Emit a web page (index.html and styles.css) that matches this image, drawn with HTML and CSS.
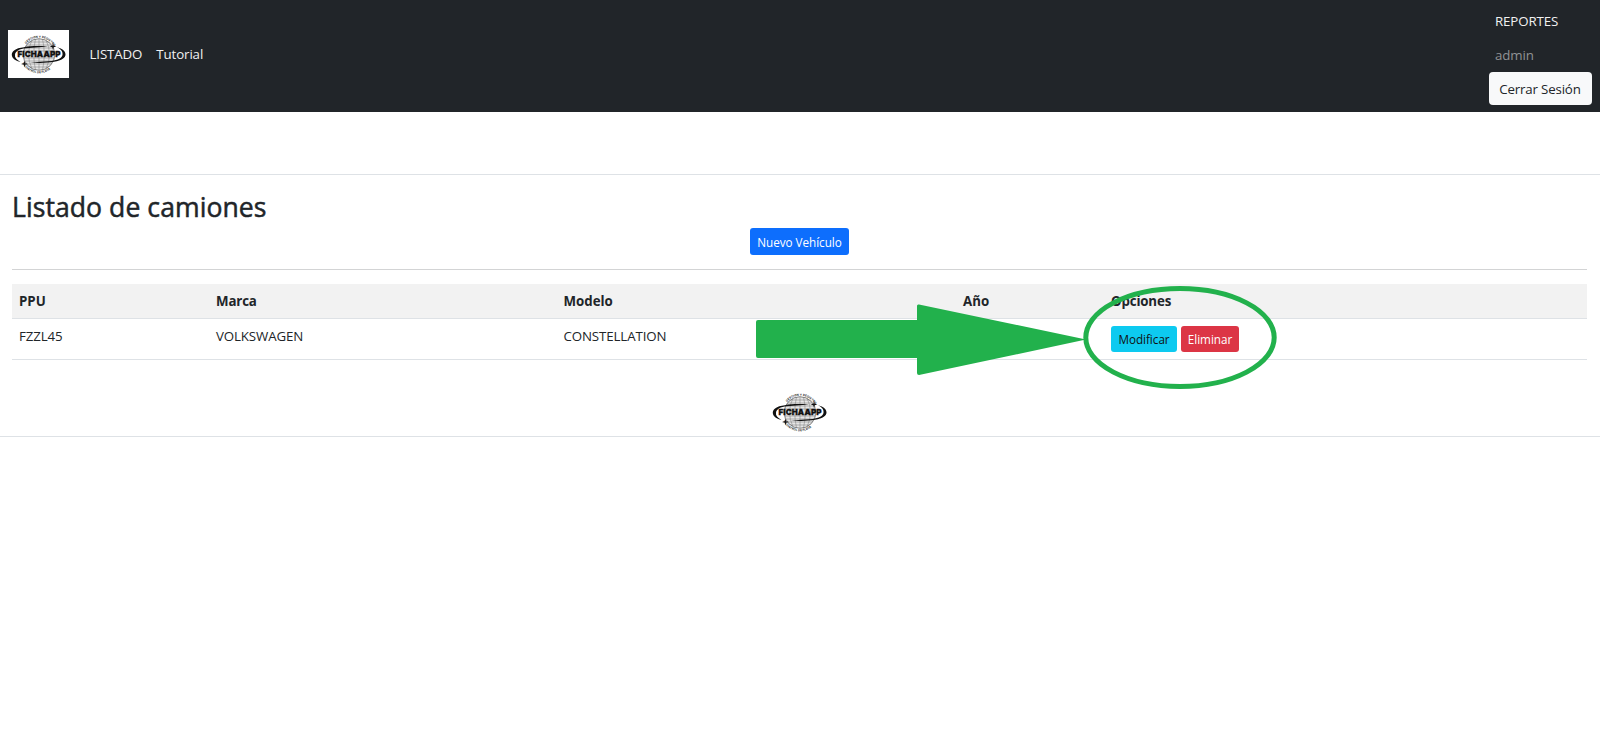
FILE: index.html
```html
<!DOCTYPE html>
<html lang="es">
<head>
<meta charset="utf-8">
<title>Listado de camiones</title>
<link rel="stylesheet" href="styles.css">
</head>
<body>
<svg class="defs" width="0" height="0" aria-hidden="true">
  <defs>
    <clipPath id="globe-clip"><circle cx="31" cy="24.5" r="16"/></clipPath>
    <path id="arc-top" d="M18 13.900A16.800 16.800 0 0 1 47.500 21"/>
    <path id="arc-bottom" d="M14 33A19 19 0 0 0 49 30"/>
    <symbol id="fichaapp" viewBox="0 0 61 48">
      <rect width="61" height="48" fill="#fff"/>
      <circle cx="31" cy="24.5" r="15.8" fill="#e6e6e6" stroke="#555" stroke-width=".7"/>
      <g clip-path="url(#globe-clip)" fill="none" stroke="#777" stroke-width=".5">
        <path d="M17 12H45M16 15H46M15 18H47M15 31H47M16 34H46M18 37H44M15 21H47M15 28H47"/>
        <path d="M31 9V40M27.500 9Q24 24 27.500 40M34.500 9Q38 24 34.500 40M24 10Q17 24 24 39M38 10Q45 24 38 39"/>
      </g>
      <path d="M16 17.200C7 18 3.600 21.500 3.800 25C4 28.500 8 31 12.500 31.800C8.500 30 6.500 27.500 7 24.500C7.500 21 11.500 18.800 18 18.200L40 16.500C31 15.800 22 16 16 17.200Z" fill="#111"/>
      <path d="M46 31.800C54 30.500 57.600 27.800 57.500 24.300C57.400 20.800 53.500 18 49 17.200C53 19 55 21.800 54.500 24.700C54 28.100 50 30.100 43.500 30.900L22 32.500C31 33.200 40 33 46 31.800Z" fill="#111"/>
      <path d="M45 13l.7 2.800 2.800.7-2.800.7-.7 2.800-.7-2.800-2.800-.7 2.800-.7zM16.500 30.500l.7 2.800 2.800.7-2.800.7-.7 2.800-.7-2.800-2.800-.7 2.800-.7z" fill="#111"/>
      <text class="brand-word" x="9.500" y="27.400" textLength="43">FICHAAPP</text>
      <text class="brand-small"><textPath href="#arc-top">GESTION Y REGISTRO</textPath></text>
      <text class="brand-small"><textPath href="#arc-bottom">Y CONTROL DE FLOTA</textPath></text>
    </symbol>
  </defs>
</svg>
<header class="navbar">
  <svg class="logo"><use href="#fichaapp"/></svg>
  <nav class="nav-main"><a>LISTADO</a><a>Tutorial</a></nav>
  <div class="nav-side">
    <a>REPORTES</a>
    <span class="user">admin</span>
    <button class="btn logout">Cerrar Sesión</button>
  </div>
</header>
<main class="panel">
  <h2>Listado de camiones</h2>
  <div class="actions"><button class="btn small primary">Nuevo Vehículo</button></div>
  <div class="rule"></div>
  <div class="row head">
    <div>PPU</div><div class="tight">Marca</div><div>Modelo</div><div>Año</div><div class="tight">Opciones</div>
  </div>
  <div class="row body">
    <div>FZZL45</div><div>VOLKSWAGEN</div><div>CONSTELLATION</div><div></div>
    <div class="options"><button class="btn small info">Modificar</button><button class="btn small danger">Eliminar</button></div>
  </div>
  <footer><svg class="logo"><use href="#fichaapp"/></svg></footer>
</main>
<svg class="annotation" viewBox="0 0 530 120">
  <path d="M8 39H167V25Q167 23 169 23.500L336 58.500L169 94Q167 94 167 92V77H8Q6 77 6 75V41Q6 39 8 39Z" fill="#22b14c"/>
  <ellipse cx="430" cy="56.500" rx="94.200" ry="49" fill="none" stroke="#22b14c" stroke-width="5"/>
</svg>
</body>
</html>
```
FILE: styles.css
```css
* { box-sizing: border-box; }
body { margin: 0; background: #fff; color: #212529; font: 13.3px/20.6px "Open Sans", "Noto Sans", sans-serif; letter-spacing: -.12px; }
.defs { position: absolute; }
.navbar { display: flex; align-items: center; height: 112px; padding: 0 8px; background: #212529; color: #f1f1f1; }
.logo { display: block; width: 61px; height: 48px; }
.navbar .logo { margin-top: -4px; }
.nav-main { display: flex; gap: 14px; margin: -3px 0 0 20.5px; }
.nav-side { display: flex; flex-direction: column; align-items: flex-start; width: 103.5px; height: 112px; margin-left: auto; padding-top: 11px; }
.nav-side a, .user { margin-left: 6.5px; }
.user { margin-top: 13.4px; color: #909294; }
.btn { border: 0; border-radius: 4px; padding: 0; font: inherit; letter-spacing: inherit; white-space: nowrap; }
.logout { width: 103px; height: 33px; margin-top: 6.4px; padding-top: 1px; background: #f8f9fa; color: #212529; letter-spacing: -.17px; }
.panel { height: 263px; margin-top: 62px; padding: 0 13px 0 12px; border: solid #dee2e6; border-width: 1px 0; }
h2 { margin: 0; padding-top: 16px; font-size: 26.6px; line-height: 33px; font-weight: 500; height: 53px; letter-spacing: .05px; -webkit-text-stroke: .5px #212529; }
.small { height: 27px; border-radius: 3px; font-size: 11.7px; line-height: 18px; letter-spacing: -.02px; }
.actions { display: flex; justify-content: center; }
.primary { width: 99px; background: #0d6efd; color: #fff; }
.rule { height: 1px; margin: 14px 0 14px; background: #d3d4d5; }
.row { display: grid; grid-template-columns: 197px 347.500px 399.500px 148px 1fr; border-bottom: 1px solid #dee2e6; }
.row > div { padding: 7px 7px; }
.head { height: 35px; background: #f2f2f2; font-weight: 700; letter-spacing: 0; }
.head .tight { letter-spacing: -.15px; }
.body { height: 41px; }
.options { display: flex; gap: 4px; }
.options .small { height: 26px; }
.info { width: 66px; background: #0dcaf0; color: #111; }
.danger { width: 58px; background: #dc3545; color: #fff; }
footer { display: flex; justify-content: center; padding-top: 28px; }
.annotation { position: absolute; left: 750px; top: 281px; width: 530px; height: 120px; pointer-events: none; }
.brand-word { font: 900 8px Inter, sans-serif; letter-spacing: 0; fill: #111; stroke: #111; stroke-width: .3px; }
.brand-small { font: 700 2.9px Inter, sans-serif; letter-spacing: .1px; fill: #222; }
```
